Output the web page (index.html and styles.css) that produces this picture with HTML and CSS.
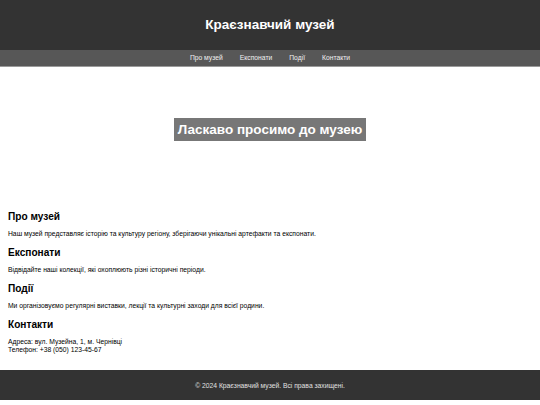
FILE: index.html
```html
<!DOCTYPE html>
<html lang="uk">
<head>
<meta charset="utf-8">
<title>Краєзнавчий музей</title>
<link rel="stylesheet" href="styles.css">
</head>
<body>
<header class="site-header">
  <h1 class="site-title">Краєзнавчий музей</h1>
</header>
<nav class="site-nav">
  <a href="#about">Про музей</a>
  <a href="#exhibits">Експонати</a>
  <a href="#events">Події</a>
  <a href="#contacts">Контакти</a>
</nav>
<section class="hero">
  <h2 class="hero-title">Ласкаво просимо до музею</h2>
</section>
<main class="content">
  <section class="block" id="about">
    <h2>Про музей</h2>
    <p>Наш музей представляє історію та культуру регіону, зберігаючи унікальні артефакти та експонати.</p>
  </section>
  <section class="block" id="exhibits">
    <h2>Експонати</h2>
    <p>Відвідайте наші колекції, які охоплюють різні історичні періоди.</p>
  </section>
  <section class="block" id="events">
    <h2>Події</h2>
    <p>Ми організовуємо регулярні виставки, лекції та культурні заходи для всієї родини.</p>
  </section>
  <section class="block" id="contacts">
    <h2>Контакти</h2>
    <p>Адреса: вул. Музейна, 1, м. Чернівці<br>Телефон: +38 (050) 123-45-67</p>
  </section>
</main>
<footer class="site-footer">
  <p>© 2024 Краєзнавчий музей. Всі права захищені.</p>
</footer>
</body>
</html>
```
FILE: styles.css
```css
* { box-sizing: border-box; }
html, body { margin: 0; padding: 0; }
body {
  font-family: "Liberation Sans", Arial, sans-serif;
  color: #000;
  background: #fff;
}
.site-header {
  background: #333;
  height: 50px;
  display: flex;
  align-items: center;
  justify-content: center;
}
.site-title {
  margin: 0;
  color: #fff;
  font-size: 13.5px;
  font-weight: bold;
  line-height: 16px;
}
.site-nav {
  background: #575757;
  height: 17px;
  border-bottom: 1px solid #9a9a9a;
  display: flex;
  justify-content: center;
  align-items: center;
  gap: 17px;
}
.site-nav a {
  color: #f0f0f0;
  text-decoration: none;
  font-size: 6.75px;
  line-height: 8px;
}
.hero {
  height: 136px;
  display: flex;
  justify-content: center;
  align-items: flex-start;
  padding-top: 51px;
}
.hero-title {
  margin: 0;
  background: #777;
  color: #fff;
  font-size: 13.5px;
  line-height: 16px;
  padding: 3.5px 4.2px;
  font-weight: bold;
}
.content {
  padding: 7px 8px 8px;
}
.block h2 {
  margin: 0 0 7px;
  font-size: 10.125px;
  line-height: 13px;
}
.block p {
  margin: 0 0 8px;
  font-size: 6.75px;
  line-height: 8px;
}
.site-footer {
  background: #333;
  color: #e0e0e0;
  height: 30px;
  display: flex;
  align-items: center;
  justify-content: center;
  padding-top: 1px;
}
.site-footer p {
  margin: 0;
  font-size: 6.75px;
  line-height: 8px;
}
```
